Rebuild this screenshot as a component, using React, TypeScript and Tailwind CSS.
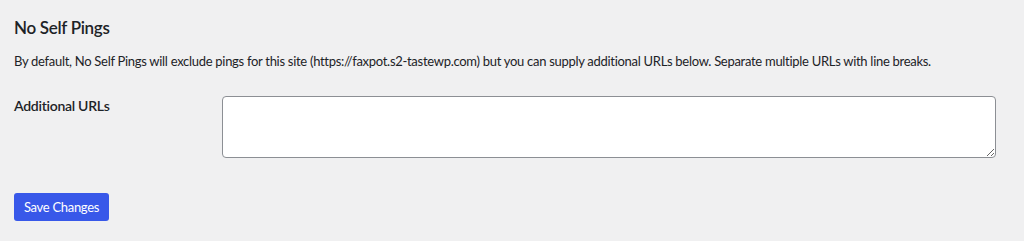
export default function App() {
  return (
    <div
      className="min-h-[241px] bg-[#f0f0f1] pl-[14px] pr-[28px] text-[#1d2327] overflow-hidden"
      style={{ fontFamily: 'Lato, "Open Sans", sans-serif' }}
    >
      <h2 className="pt-[17px] text-[17px] leading-[22px] font-semibold tracking-[-0.3px]">No Self Pings</h2>
      <p className="mt-[13px] text-[13px] leading-[19.5px] whitespace-nowrap tracking-[-0.29px]">
        By default, No Self Pings will exclude pings for this site (https://faxpot.s2-tastewp.com) but you can supply additional URLs below. Separate multiple URLs with line breaks.
      </p>
      <div className="mt-[24px] flex">
        <label className="w-[208px] shrink-0 text-[14px] leading-[20px] font-semibold tracking-[-0.27px]">
          Additional URLs
        </label>
        <textarea className="flex-1 h-[62px] bg-white border border-[#8c8f94] rounded-[4px] px-2 py-1 text-[14px] outline-none" />
      </div>
      <div className="mt-[35px]">
        <button className="w-[95px] h-[28px] bg-[#3858e9] text-white text-[13px] leading-[28px] rounded-[3px] tracking-[-0.3px] text-center">
          Save Changes
        </button>
      </div>
    </div>
  );
}
